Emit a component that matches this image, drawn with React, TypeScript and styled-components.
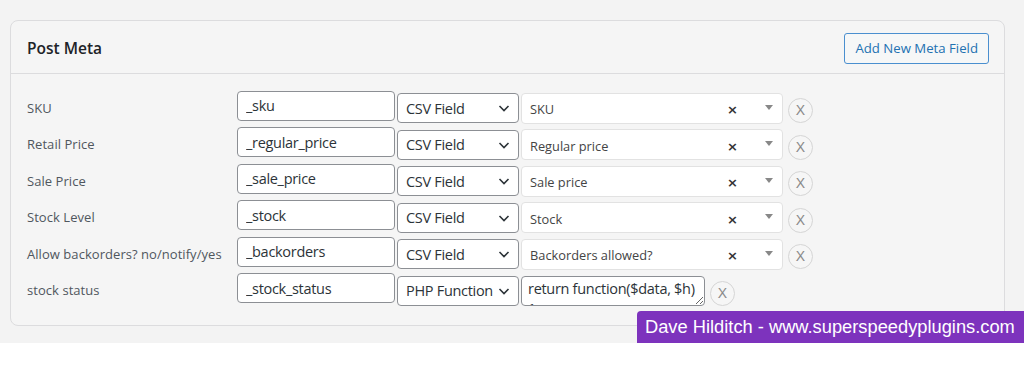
import React from "react";
import styled, { createGlobalStyle } from "styled-components";

const Global = createGlobalStyle`
  html, body { margin: 0; padding: 0; background: #ffffff; }
  #root { width: 1024px; }
  * { box-sizing: border-box; }
`;

const Page = styled.div`
  position: relative;
  height: 343px;
  background: #f3f3f3;
  padding: 20px 19px 0 10px;
  font-family: "Open Sans", "Noto Sans", sans-serif;
`;

const Panel = styled.section`
  height: 306px;
  border: 1px solid #dcdcde;
  border-radius: 8px;
  background: #f5f5f5;
`;

const Header = styled.header`
  height: 53px;
  border-bottom: 1px solid #dcdcde;
  display: flex;
  align-items: center;
  justify-content: space-between;
  padding: 0 15px 0 16px;
`;

const Title = styled.h2`
  margin: 2px 0 0 0;
  font-size: 15.5px;
  font-weight: 600;
  color: #1d2327;
  letter-spacing: 0;
`;

const AddButton = styled.button`
  height: 31px;
  padding: 0 10px;
  margin-top: 2px;
  border: 1px solid #4a8fcf;
  border-radius: 3px;
  background: #f6f7f7;
  color: #2271b1;
  font-family: "Open Sans", "Noto Sans", sans-serif;
  font-size: 13.2px;
`;

const Body = styled.div`
  padding: 16.5px 16px 0 16px;
  display: flex;
  flex-direction: column;
  gap: 6.5px;
`;

const Row = styled.div`
  display: flex;
  align-items: flex-start;
  height: 30px;
`;

const Label = styled.div`
  width: 210px;
  height: 30px;
  line-height: 34px;
  font-size: 13px;
  letter-spacing: 0.05px;
  color: #50575e;
  white-space: nowrap;
`;

const KeyInput = styled.input`
  width: 158px;
  height: 30px;
  border: 1px solid #8c8f94;
  border-radius: 4px;
  padding: 0 8px;
  font-family: "Open Sans", "Noto Sans", sans-serif;
  font-size: 14.5px;
  letter-spacing: -0.3px;
  color: #2c3338;
  background: #fff;
  outline: none;
`;

const SelectBox = styled.div`
  margin-left: 2px;
  margin-top: 2.5px;
  width: 122px;
  height: 30px;
  border: 1px solid #8c8f94;
  border-radius: 4px;
  background: #fff;
  display: flex;
  align-items: center;
  justify-content: space-between;
  padding: 0 7px 0 8px;
  font-size: 14.5px;
  letter-spacing: -0.3px;
  color: #2c3338;
  white-space: nowrap;
`;

const Chevron = styled.svg`
  flex: none;
  width: 14px;
  height: 14px;
`;

const Select2 = styled.div`
  margin-left: 2px;
  margin-top: 2px;
  width: 262px;
  height: 31px;
  border: 1px solid #e2e2e2;
  border-radius: 4px;
  background: #fff;
  display: flex;
  align-items: center;
  padding: 0 6px 0 8px;
  font-size: 12.8px;
  color: #444;
`;

const Select2Text = styled.span`
  flex: 1;
  padding-top: 2px;
`;

const Clear = styled.span`
  width: 12px;
  margin-right: 26px;
  font-family: "DejaVu Sans", sans-serif;
  font-weight: bold;
  font-size: 13px;
  color: #333;
  padding-top: 3px;
`;

const Caret = styled.span`
  width: 0;
  height: 0;
  margin-right: 3px;
  margin-top: -2px;
  border-left: 4.5px solid transparent;
  border-right: 4.5px solid transparent;
  border-top: 5px solid #888;
`;

const Code = styled.textarea`
  margin-left: 2px;
  margin-top: 2.5px;
  width: 184px;
  height: 30.5px;
  border: 1px solid #8c8f94;
  border-radius: 4px;
  padding: 2px 4px 2px 6px;
  font-family: "Open Sans", "Noto Sans", sans-serif;
  font-size: 14.5px;
  letter-spacing: -0.3px;
  line-height: 20px;
  color: #2c3338;
  background: #fff;
  overflow: hidden;
  resize: both;
  outline: none;
`;

const Remove = styled.button<{ $gap: number }>`
  margin-left: ${(p) => p.$gap}px;
  margin-top: 7.5px;
  width: 25px;
  height: 25px;
  border-radius: 50%;
  border: 1px solid #d5d5d5;
  background: #f6f6f6;
  color: #8a8a8a;
  font-family: "Liberation Sans", Arial, sans-serif;
  font-size: 14px;
  padding: 0;
  line-height: 23px;
  flex: none;
`;

const Watermark = styled.div`
  position: absolute;
  left: 637px;
  top: 311px;
  width: 387px;
  height: 32px;
  background: #7d33bd;
  border-radius: 4px 0 0 0;
  color: #fff;
  font-family: "Liberation Sans", Arial, sans-serif;
  font-size: 18.3px;
  line-height: 32px;
  padding-left: 8px;
  white-space: nowrap;
`;

const rows = [
  { label: "SKU", key: "_sku", value: "SKU" },
  { label: "Retail Price", key: "_regular_price", value: "Regular price" },
  { label: "Sale Price", key: "_sale_price", value: "Sale price" },
  { label: "Stock Level", key: "_stock", value: "Stock" },
  { label: "Allow backorders? no/notify/yes", key: "_backorders", value: "Backorders allowed?" },
];

const ChevronIcon = () => (
  <Chevron viewBox="0 0 14 14">
    <path d="M2.5 5 L7 9.5 L11.5 5" fill="none" stroke="#2c3338" strokeWidth="1.6" />
  </Chevron>
);

export default function App() {
  return (
    <>
      <Global />
      <Page>
        <Panel>
          <Header>
            <Title>Post Meta</Title>
            <AddButton>Add New Meta Field</AddButton>
          </Header>
          <Body>
            {rows.map((r) => (
              <Row key={r.key}>
                <Label>{r.label}</Label>
                <KeyInput defaultValue={r.key} />
                <SelectBox>
                  CSV Field
                  <ChevronIcon />
                </SelectBox>
                <Select2>
                  <Select2Text>{r.value}</Select2Text>
                  <Clear>×</Clear>
                  <Caret />
                </Select2>
                <Remove $gap={5}>X</Remove>
              </Row>
            ))}
            <Row>
              <Label>stock status</Label>
              <KeyInput defaultValue="_stock_status" />
              <SelectBox>
                PHP Function
                <ChevronIcon />
              </SelectBox>
              <Code defaultValue={"return function($data, $h) {\n  return $data;\n};"} />
              <Remove $gap={5}>X</Remove>
            </Row>
          </Body>
        </Panel>
        <Watermark>Dave Hilditch - www.superspeedyplugins.com</Watermark>
      </Page>
    </>
  );
}
